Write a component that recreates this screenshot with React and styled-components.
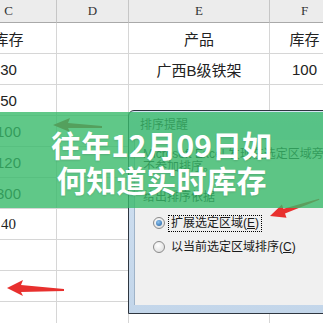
import React from "react";
import styled, { createGlobalStyle } from "styled-components";

const Global = createGlobalStyle`
  html, body { margin: 0; padding: 0; background: #ffffff; overflow: hidden; }
  #root { width: 323px; height: 323px; }
`;

const Page = styled.div`
  position: relative;
  width: 323px;
  height: 323px;
  overflow: hidden;
  background: #ffffff;
`;

const Sheet = styled.div`
  display: grid;
  grid-template-columns: 96px 72px 141px 70px;
  grid-auto-rows: 31px;
  grid-template-rows: 23px;
  margin-left: -39px;
  width: 379px;
`;

const HeadCell = styled.div`
  display: flex;
  align-items: center;
  justify-content: center;
  background: #ececec;
  border-right: 1px solid #c6c6c6;
  border-bottom: 1px solid #a9a9a9;
  font-family: "Liberation Serif", serif;
  font-size: 13px;
  color: #333333;
`;

const Cell = styled.div`
  display: flex;
  align-items: center;
  justify-content: center;
  border-right: 1px solid #d6d6d6;
  border-bottom: 1px solid #d6d6d6;
  font-family: ${(p) =>
    p.$serif
      ? '"Liberation Serif", "Noto Sans CJK SC", serif'
      : '"Liberation Sans", "Noto Sans CJK SC", sans-serif'};
  font-size: 15px;
  color: #222222;
  white-space: nowrap;
`;

const Dialog = styled.div`
  position: absolute;
  left: 128px;
  top: 110px;
  width: 230px;
  height: 204px;
  border: 1px solid #2e3640;
  border-radius: 6px 6px 0 0;
  background: linear-gradient(#d4e3f3, #c3d6ea);
  display: flex;
  flex-direction: column;
  box-sizing: border-box;
`;

const TitleBar = styled.div`
  height: 29px;
  display: flex;
  align-items: center;
  padding: 0 0 4px 11px;
  box-sizing: border-box;
  font-family: "Noto Sans CJK SC", sans-serif;
  font-size: 12px;
  color: #1e1e1e;
`;

const DialogBody = styled.div`
  flex: 1;
  margin: 0 0 8px 5px;
  background: #f0f0f0;
  border-left: 1px solid #9fb3c8;
  padding: 8px 0 0 8px;
  font-family: "Liberation Sans", "Noto Sans CJK SC", sans-serif;
  font-size: 12px;
  line-height: 13px;
  color: #1a1a1a;
  display: flex;
  flex-direction: column;
  overflow: hidden;
`;

const Line = styled.div`
  white-space: nowrap;
  margin-top: ${(p) => p.$gap || 0}px;
`;

const RadioRow = styled.div`
  display: flex;
  align-items: center;
  height: 18px;
  margin-top: ${(p) => p.$gap || 0}px;
  padding-left: 10px;
  gap: 3px;
  white-space: nowrap;
`;

const RadioDot = styled.span`
  width: 10px;
  height: 10px;
  border-radius: 50%;
  border: 1px solid #8a8a8a;
  background: radial-gradient(circle at 40% 35%, #ffffff, #d8d8d8);
  display: flex;
  align-items: center;
  justify-content: center;
  flex: none;
  &::after {
    content: "";
    display: ${(p) => (p.$on ? "block" : "none")};
    width: 6px;
    height: 6px;
    border-radius: 50%;
    background: radial-gradient(circle at 40% 35%, #8fc4f0, #1f5d9e);
  }
`;

const RadioLabel = styled.span`
  padding: 1px 2px;
  border: 1px dotted ${(p) => (p.$focus ? "#000000" : "transparent")};
`;

const Under = styled.u`
  text-decoration: underline;
`;

const Arrows = styled.svg`
  position: absolute;
  left: 0;
  top: 0;
  width: 323px;
  height: 323px;
  pointer-events: none;
`;

const Band = styled.div`
  position: absolute;
  left: 0;
  top: 112px;
  width: 323px;
  height: 96px;
  background: rgba(56, 186, 106, 0.8);
  box-sizing: border-box;
  padding-top: 15px;
  display: flex;
  justify-content: center;
`;

const Title = styled.h1`
  margin: 0;
  width: 240px;
  text-align: center;
  font-family: "Noto Sans CJK SC", sans-serif;
  font-weight: 700;
  font-size: 30px;
  line-height: 35px;
  color: #ffffff;
  text-shadow: 0 1px 2px rgba(0, 0, 0, 0.12);
`;

const rows = [
  ["库存", "", "产品", "库存"],
  ["30", "", "广西B级铁架", "100"],
  ["50", "", "", ""],
  ["100", "", "", ""],
  ["120", "", "", ""],
  ["300", "", "", ""],
  ["40", "", "", ""],
  ["", "", "", ""],
  ["", "", "", ""],
  ["", "", "", ""],
];

export default function App() {
  return (
    <Page>
      <Global />
      <Sheet>
        {["C", "D", "E", "F"].map((c) => (
          <HeadCell key={c}>{c}</HeadCell>
        ))}
        {rows.map((r, i) =>
          r.map((v, j) => (
            <Cell key={i + "-" + j} $serif={v === "40"}>
              {v}
            </Cell>
          ))
        )}
      </Sheet>

      <Dialog>
        <TitleBar>排序提醒</TitleBar>
        <DialogBody>
          <Line>Microsoft Excel 发现在选定区域旁边还有数据。该数据未被选择，将</Line>
          <Line>不参加排序。</Line>
          <Line $gap={17}>给出排序依据</Line>
          <RadioRow $gap={10}>
            <RadioDot $on />
            <RadioLabel $focus>
              扩展选定区域(<Under>E</Under>)
            </RadioLabel>
          </RadioRow>
          <RadioRow $gap={6}>
            <RadioDot />
            <RadioLabel>
              以当前选定区域排序(<Under>C</Under>)
            </RadioLabel>
          </RadioRow>
        </DialogBody>
      </Dialog>

      <Arrows viewBox="0 0 323 323">
        <polygon
          points="7,288 23,280 21,285 64,289 64,291 21,292 23,296"
          fill="#e8302e"
        />
        <polygon
          points="270,216 281.9,204.6 283.4,208.8 319,198.8 319.4,199.8 285,213.6 286.5,217.8"
          fill="#e8302e"
        />
        <polygon
          points="53,125 70,118 68,123 102,126 102,128 68,128 70,132"
          fill="#c0392b"
        />
      </Arrows>

      <Band>
        <Title>往年12月09日如何知道实时库存</Title>
      </Band>
    </Page>
  );
}
